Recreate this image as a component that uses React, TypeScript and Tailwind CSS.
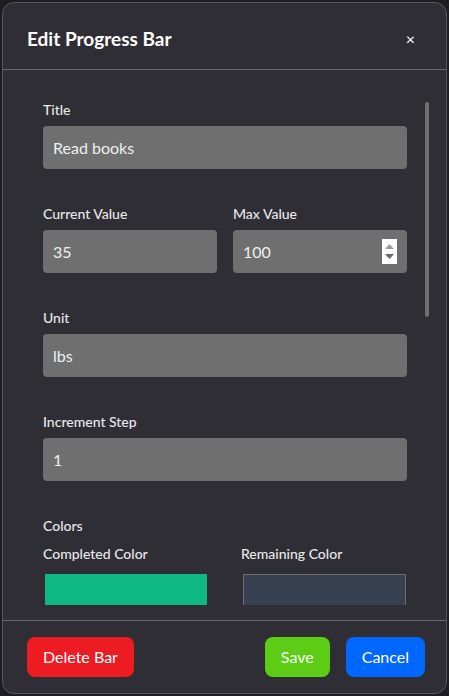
import React from "react";

const Field = ({ label, value, spinner }: { label: string; value: string; spinner?: boolean }) => (
  <div className="flex flex-col">
    <label className="h-5 text-sm leading-5 font-medium text-[#e8e8ea]">{label}</label>
    <div className="mt-1.5 relative flex h-[43px] items-center rounded bg-[#6f6f6f] px-2.5 text-base text-[#f0f0f0]">
      {value}
      {spinner && (
        <div className="absolute right-[10px] top-[9px] flex h-[25px] w-[15px] flex-col items-center justify-center gap-[5px] bg-white">
          <svg width="9" height="5" viewBox="0 0 9 5">
            <path d="M0 5 L4.5 0 L9 5 Z" fill="#9a9a9a" />
          </svg>
          <svg width="9" height="5" viewBox="0 0 9 5">
            <path d="M0 0 L4.5 5 L9 0 Z" fill="#6a6a6a" />
          </svg>
        </div>
      )}
    </div>
  </div>
);

export default function App() {
  return (
    <div className="min-h-screen bg-[#1e1e20] p-0.5" style={{ fontFamily: "Lato, 'Noto Sans', sans-serif" }}>
      <div className="flex h-[692px] flex-col rounded-xl border border-[#58585c] bg-[#2f2e34]">
        <div className="flex h-[67px] shrink-0 items-center justify-between border-b border-[#6a6a6e] pt-1.5 pl-6 pr-[31px]">
          <h2 className="text-[19px] font-bold text-white">Edit Progress Bar</h2>
          <span className="text-base text-white">×</span>
        </div>

        <div className="relative mt-4 h-[519px] overflow-hidden">
          <div className="absolute right-[17px] top-[16px] h-[215px] w-1 rounded-full bg-[#6f6f6f]" />
          <div className="flex flex-col gap-[35px] pl-10 pr-[39px] pt-[14px]">
            <Field label="Title" value="Read books" />
            <div className="grid grid-cols-2 gap-4">
              <Field label="Current Value" value="35" />
              <Field label="Max Value" value="100" spinner />
            </div>
            <Field label="Unit" value="lbs" />
            <Field label="Increment Step" value="1" />
            <div className="flex flex-col">
              <div className="h-5 text-sm leading-5 font-medium text-[#e8e8ea]">Colors</div>
              <div className="mt-2 grid grid-cols-2 gap-8">
                <div className="flex flex-col">
                  <div className="h-5 text-sm leading-5 font-medium text-[#e8e8ea]">Completed Color</div>
                  <div className="ml-0.5 mt-2.5 h-10 w-[162px] bg-[#10b981]" />
                </div>
                <div className="flex flex-col">
                  <div className="h-5 text-sm leading-5 font-medium text-[#e8e8ea]">Remaining Color</div>
                  <div className="ml-0.5 mt-2.5 h-10 w-[163px] border border-[#6f6f6f] bg-[#374151]" />
                </div>
              </div>
            </div>
          </div>
        </div>

        <div className="mt-auto flex h-[73px] items-center border-t border-[#6a6a6e] pl-6 pr-[21px]">
          <button className="h-10 rounded-lg bg-[#ec1c22] px-4 text-base text-white">Delete Bar</button>
          <div className="ml-auto flex gap-4">
            <button className="h-10 rounded-lg bg-[#5ccc14] px-4 text-base text-white">Save</button>
            <button className="h-10 rounded-lg bg-[#0068ff] px-4 text-base text-white">Cancel</button>
          </div>
        </div>
      </div>
    </div>
  );
}
